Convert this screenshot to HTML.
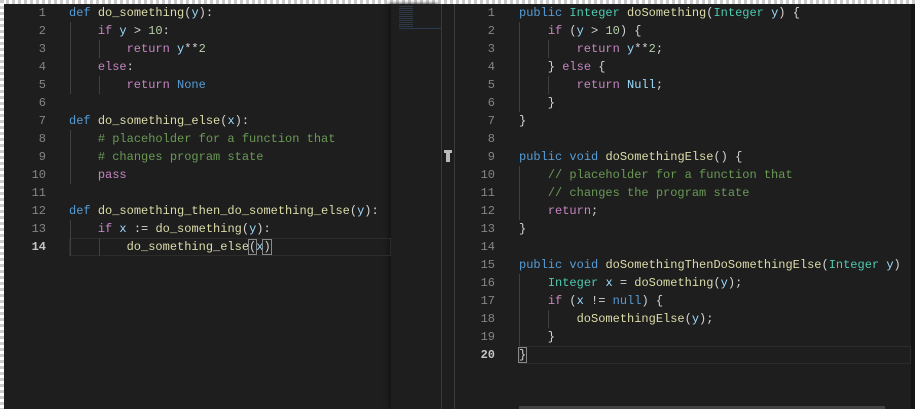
<!DOCTYPE html>
<html><head><meta charset="utf-8"><style>
*{margin:0;padding:0;box-sizing:border-box}
body{width:915px;height:409px;background:#1e1e1e;overflow:hidden;position:relative;font-family:"Liberation Mono",monospace;font-size:12px}
.b{position:absolute}
.ln{position:absolute;width:40px;text-align:right;color:#858585;height:18px;line-height:19px}
.c{position:absolute;white-space:pre;height:18px;line-height:19px;color:#d4d4d4}
.k{color:#569cd6}.p{color:#c586c0}.f{color:#dcdcaa}.v{color:#9cdcfe}.m{color:#6a9955}.n{color:#b5cea8}.t{color:#4ec9b0}
.g{position:absolute;width:1px;background:#404040}
</style></head><body>
<div class="b" style="left:0;top:0;width:915px;height:4px;background:repeating-linear-gradient(90deg,#ccc 0 3px,#fff 3px 6px)"></div>
<div class="b" style="left:0;top:0;width:4px;height:409px;background:repeating-linear-gradient(180deg,#ccc 0 3px,#fff 3px 6px)"></div>
<div class="b" style="left:391px;top:4px;width:50px;height:405px;background:#1e1e1e;box-shadow:-3px 0 4px #151515"></div>
<div class="b" style="left:441px;top:4px;width:1px;height:405px;background:#3a3a3a"></div>
<div class="b" style="left:454px;top:4px;width:1px;height:405px;background:#3a3a3a"></div>
<div class="b" style="left:444px;top:150px;width:8px;height:3px;background:#bbb"></div>
<div class="b" style="left:446px;top:150px;width:4px;height:12px;background:#bbb"></div>
<div class="b" style="left:399px;top:6px;width:14px;height:22px;background:repeating-linear-gradient(180deg,#3c4a5c 0 1px,transparent 1px 2px);opacity:.6"></div>
<div class="b" style="left:399px;top:28px;width:42px;height:1px;background:#2a3a50"></div>
<div class="b" style="left:911px;top:4px;width:4px;height:405px;background:#151515"></div>
<div class="b" style="left:519px;top:406px;width:366px;height:3px;background:#444"></div>

<div class="b" style="left:69px;top:238px;width:322px;height:18px;border:1px solid #2b2b2b"></div>
<div class="b" style="left:519px;top:346px;width:392px;height:18px;border:1px solid #2b2b2b"></div>

<div class="g" style="left:70px;top:22px;height:72px"></div>
<div class="g" style="left:99px;top:40px;height:18px"></div>
<div class="g" style="left:99px;top:76px;height:18px"></div>
<div class="g" style="left:70px;top:130px;height:54px"></div>
<div class="g" style="left:70px;top:220px;height:36px"></div>
<div class="g" style="left:99px;top:238px;height:18px"></div>
<div class="g" style="left:519px;top:22px;height:90px"></div>
<div class="g" style="left:548px;top:40px;height:18px"></div>
<div class="g" style="left:548px;top:76px;height:18px"></div>
<div class="g" style="left:519px;top:166px;height:54px"></div>
<div class="g" style="left:519px;top:274px;height:72px"></div>
<div class="g" style="left:548px;top:310px;height:18px"></div>

<div class="ln" style="left:6px;top:4px">1</div><div class="ln" style="left:6px;top:22px">2</div><div class="ln" style="left:6px;top:40px">3</div><div class="ln" style="left:6px;top:58px">4</div><div class="ln" style="left:6px;top:76px">5</div><div class="ln" style="left:6px;top:94px">6</div><div class="ln" style="left:6px;top:112px">7</div><div class="ln" style="left:6px;top:130px">8</div><div class="ln" style="left:6px;top:148px">9</div><div class="ln" style="left:6px;top:166px">10</div><div class="ln" style="left:6px;top:184px">11</div><div class="ln" style="left:6px;top:202px">12</div><div class="ln" style="left:6px;top:220px">13</div><div class="ln" style="left:6px;top:238px;color:#c6c6c6;font-weight:bold">14</div>

<div class="c" style="left:69px;top:4px"><span class="k">def</span> <span class="f">do_something</span>(<span class="v">y</span>):</div>
<div class="c" style="left:69px;top:22px">    <span class="p">if</span> <span class="v">y</span> &gt; <span class="n">10</span>:</div>
<div class="c" style="left:69px;top:40px">        <span class="p">return</span> <span class="v">y</span>**<span class="n">2</span></div>
<div class="c" style="left:69px;top:58px">    <span class="p">else</span>:</div>
<div class="c" style="left:69px;top:76px">        <span class="p">return</span> <span class="k">None</span></div>
<div class="c" style="left:69px;top:112px"><span class="k">def</span> <span class="f">do_something_else</span>(<span class="v">x</span>):</div>
<div class="c" style="left:69px;top:130px">    <span class="m"># placeholder for a function that</span></div>
<div class="c" style="left:69px;top:148px">    <span class="m"># changes program state</span></div>
<div class="c" style="left:69px;top:166px">    <span class="p">pass</span></div>
<div class="c" style="left:69px;top:202px"><span class="k">def</span> <span class="f">do_something_then_do_something_else</span>(<span class="v">y</span>):</div>
<div class="c" style="left:69px;top:220px">    <span class="p">if</span> <span class="v">x</span> := <span class="f">do_something</span>(<span class="v">y</span>):</div>
<div class="c" style="left:69px;top:238px">        <span class="f">do_something_else</span><span style="outline:1px solid #888">(</span><span class="v">x</span><span style="outline:1px solid #888">)</span></div>

<div class="ln" style="left:455px;top:4px">1</div><div class="ln" style="left:455px;top:22px">2</div><div class="ln" style="left:455px;top:40px">3</div><div class="ln" style="left:455px;top:58px">4</div><div class="ln" style="left:455px;top:76px">5</div><div class="ln" style="left:455px;top:94px">6</div><div class="ln" style="left:455px;top:112px">7</div><div class="ln" style="left:455px;top:130px">8</div><div class="ln" style="left:455px;top:148px">9</div><div class="ln" style="left:455px;top:166px">10</div><div class="ln" style="left:455px;top:184px">11</div><div class="ln" style="left:455px;top:202px">12</div><div class="ln" style="left:455px;top:220px">13</div><div class="ln" style="left:455px;top:238px">14</div><div class="ln" style="left:455px;top:256px">15</div><div class="ln" style="left:455px;top:274px">16</div><div class="ln" style="left:455px;top:292px">17</div><div class="ln" style="left:455px;top:310px">18</div><div class="ln" style="left:455px;top:328px">19</div><div class="ln" style="left:455px;top:346px;color:#c6c6c6;font-weight:bold">20</div>

<div class="c" style="left:519px;top:4px"><span class="k">public</span> <span class="t">Integer</span> <span class="f">doSomething</span>(<span class="t">Integer</span> <span class="v">y</span>) {</div>
<div class="c" style="left:519px;top:22px">    <span class="p">if</span> (<span class="v">y</span> &gt; <span class="n">10</span>) {</div>
<div class="c" style="left:519px;top:40px">        <span class="p">return</span> <span class="v">y</span>**<span class="n">2</span>;</div>
<div class="c" style="left:519px;top:58px">    } <span class="p">else</span> {</div>
<div class="c" style="left:519px;top:76px">        <span class="p">return</span> <span class="v">Null</span>;</div>
<div class="c" style="left:519px;top:94px">    }</div>
<div class="c" style="left:519px;top:112px">}</div>
<div class="c" style="left:519px;top:148px"><span class="k">public</span> <span class="k">void</span> <span class="f">doSomethingElse</span>() {</div>
<div class="c" style="left:519px;top:166px">    <span class="m">// placeholder for a function that</span></div>
<div class="c" style="left:519px;top:184px">    <span class="m">// changes the program state</span></div>
<div class="c" style="left:519px;top:202px">    <span class="p">return</span>;</div>
<div class="c" style="left:519px;top:220px">}</div>
<div class="c" style="left:519px;top:256px"><span class="k">public</span> <span class="k">void</span> <span class="f">doSomethingThenDoSomethingElse</span>(<span class="t">Integer</span> <span class="v">y</span>)</div>
<div class="c" style="left:519px;top:274px">    <span class="t">Integer</span> <span class="v">x</span> = <span class="f">doSomething</span>(<span class="v">y</span>);</div>
<div class="c" style="left:519px;top:292px">    <span class="p">if</span> (<span class="v">x</span> != <span class="k">null</span>) {</div>
<div class="c" style="left:519px;top:310px">        <span class="f">doSomethingElse</span>(<span class="v">y</span>);</div>
<div class="c" style="left:519px;top:328px">    }</div>
<div class="c" style="left:519px;top:346px"><span style="outline:1px solid #888">}</span></div>
</body></html>
